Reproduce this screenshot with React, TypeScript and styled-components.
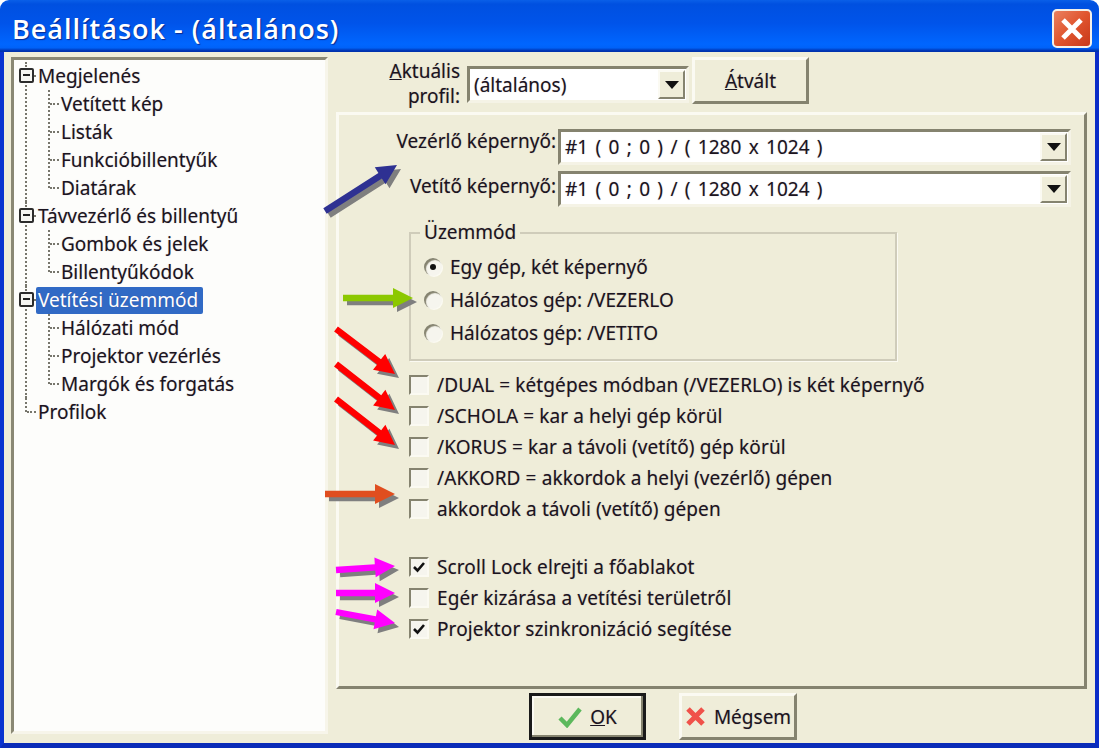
import React from 'react';
import styled, { createGlobalStyle } from 'styled-components';

const GlobalStyle = createGlobalStyle`
  html, body {
    margin: 0;
    padding: 0;
    background: #fff;
    overflow: hidden;
  }
  * {
    box-sizing: border-box;
  }
`;

const Window = styled.div`
  position: relative;
  width: 1099px;
  height: 748px;
  display: flex;
  flex-direction: column;
  font-family: "Noto Sans", "Liberation Sans", sans-serif;
  font-size: 19px;
  color: #1b1420;
  text-shadow: 0 0 1px rgba(60, 30, 70, 0.35);
`;

const TitleBar = styled.div`
  height: 52px;
  flex: none;
  display: flex;
  align-items: center;
  justify-content: space-between;
  padding: 0 7px 0 12px;
  border-radius: 9px 9px 0 0;
  background: linear-gradient(180deg, #0a5fe8 0, #0050e0 8%, #0054ea 45%, #0066ff 85%, #0062f8 92%, #0038b8 97%, #0030a8 100%);
`;

const Title = styled.div`
  padding-top: 5px;
  color: #fff;
  font-family: "Open Sans", "Liberation Sans", sans-serif;
  font-size: 27px;
  font-weight: 600;
  letter-spacing: 1px;
  text-shadow: 1px 1px 1px #0a2a90;
`;

const CloseButton = styled.div`
  width: 40px;
  height: 39px;
  margin-top: 5px;
  display: flex;
  align-items: center;
  justify-content: center;
  border: 2px solid #f4f1ea;
  border-radius: 5px;
  background: linear-gradient(135deg, #ea8060 0, #e0552e 50%, #c8381a 100%);
`;

const Body = styled.div`
  flex: 1;
  display: flex;
  gap: 8px;
  padding: 5px 4px 0 7px;
  background: #efedd9;
  border-left: 4px solid #0a34d0;
  border-right: 4px solid #0a2cc8;
  border-bottom: 5px solid #0a2cb8;
`;

const Tree = styled.div`
  width: 317px;
  height: 677px;
  padding-top: 2px;
  background: #fdfdfb;
  border: 3px solid;
  border-color: #8a8874 #f7f5ea #f7f5ea #8a8874;
`;

const Branch = styled.div<{ $last?: boolean }>`
  position: relative;
  &::before {
    content: "";
    position: absolute;
    left: 11px;
    top: 0;
    height: ${(p) => (p.$last ? '14px' : '100%')};
    border-left: 2px dotted #77766c;
  }
`;

const ChildGroup = styled.div`
  position: relative;
  &::before {
    content: "";
    position: absolute;
    left: 34px;
    top: 0;
    bottom: 14px;
    border-left: 2px dotted #77766c;
  }
`;

const Row = styled.div<{ $child?: boolean; $leaf?: boolean }>`
  position: relative;
  height: 28px;
  display: flex;
  align-items: center;
  padding-left: ${(p) => (p.$child ? '45px' : '22px')};
  &::before {
    content: "";
    position: absolute;
    left: ${(p) => (p.$child ? '36px' : p.$leaf ? '13px' : '18px')};
    width: ${(p) => (p.$child ? '9px' : p.$leaf ? '9px' : '4px')};
    top: 13px;
    border-top: 2px dotted #77766c;
  }
`;

const Label = styled.span<{ $selected?: boolean }>`
  height: 27px;
  line-height: 26px;
  padding: 0 ${(p) => (p.$selected ? '5px' : '2px')} 0 2px;
  border-radius: 2px;
  white-space: nowrap;
  background: ${(p) => (p.$selected ? '#316ac5' : 'transparent')};
  color: ${(p) => (p.$selected ? '#fff' : 'inherit')};
`;

const Expander = styled.span`
  position: absolute;
  z-index: 1;
  left: 5px;
  top: 6px;
  width: 15px;
  height: 15px;
  background: #f6f6f2;
  border: 2px solid #2c2c2c;
  border-radius: 2px;
  &::after {
    content: "";
    position: absolute;
    left: 2px;
    right: 2px;
    top: 4px;
    height: 2px;
    background: #222;
  }
`;

const RightColumn = styled.div`
  width: 751px;
  display: flex;
  flex-direction: column;
`;

const ProfileRow = styled.div`
  height: 55px;
  flex: none;
  display: flex;
  align-items: flex-start;
`;

const ProfileLabel = styled.div`
  width: 124px;
  margin-right: 7px;
  padding-top: 2px;
  text-align: right;
  line-height: 25px;
`;

const Combo = styled.div<{ $width?: number; $height?: number; $top?: number }>`
  width: ${(p) => (p.$width ? `${p.$width}px` : '100%')};
  height: ${(p) => p.$height || 36}px;
  margin-top: ${(p) => p.$top || 0}px;
  flex: none;
  display: flex;
  align-items: center;
  justify-content: space-between;
  padding: 1px 1px 1px 4px;
  background: #fff;
  border: 3px solid;
  border-color: #85836f #f5f3e6 #f5f3e6 #85836f;
  white-space: nowrap;
  word-spacing: 2.4px;
`;

const ComboArrow = styled.span`
  width: 27px;
  height: 100%;
  flex: none;
  display: flex;
  align-items: center;
  justify-content: center;
  background: #efedd9;
  border: 2px solid;
  border-color: #fbfaf2 #85836f #85836f #fbfaf2;
  &::after {
    content: "";
    border-left: 7px solid transparent;
    border-right: 7px solid transparent;
    border-top: 8px solid #111;
  }
`;

const Button = styled.div<{ $width: number; $default?: boolean; $left?: number }>`
  width: ${(p) => p.$width}px;
  height: 47px;
  margin-left: ${(p) => p.$left || 0}px;
  flex: none;
  display: flex;
  align-items: center;
  justify-content: center;
  gap: 8px;
  background: #efedd9;
  border: 3px solid;
  border-color: ${(p) => (p.$default ? '#1a1a1a' : '#fbfaf2 #85836f #85836f #fbfaf2')};
  box-shadow: ${(p) => (p.$default ? 'inset -2px -2px 0 #85836f, inset 2px 2px 0 #fbfaf2' : 'none')};
`;

const Panel = styled.div`
  height: 577px;
  flex: none;
  padding: 14px 13px 0 0;
  border: 3px solid;
  border-color: #fbfaf2 #85836f #85836f #fbfaf2;
`;

const ScreenRow = styled.div`
  display: grid;
  grid-template-columns: 217px 1fr;
  column-gap: 2px;
  margin-bottom: 6px;
`;

const ScreenLabel = styled.div<{ $lift: number }>`
  text-align: right;
  line-height: ${(p) => p.$lift}px;
  white-space: nowrap;
`;

const ModeGroup = styled.fieldset`
  width: 488px;
  height: 140px;
  margin: 14px 0 0 70px;
  padding: 5px 0 0 13px;
  border: 2px solid #cfccba;
  box-shadow: 1px 1px 0 #fbfaf2;
`;

const ModeLegend = styled.legend`
  margin-left: -4px;
  padding: 0 4px;
  height: 24px;
  line-height: 22px;
`;

const OptionRow = styled.div<{ $height: number }>`
  height: ${(p) => p.$height}px;
  display: flex;
  align-items: center;
  gap: 8px;
  white-space: nowrap;
`;

const RadioDot = styled.span<{ $checked?: boolean }>`
  position: relative;
  width: 18px;
  height: 18px;
  flex: none;
  border-radius: 50%;
  background: #f6f5ee;
  box-shadow: inset 2px 2px 1px #85836f, 1px 1px 0 #fbfaf2;
  &::after {
    content: "";
    display: ${(p) => (p.$checked ? 'block' : 'none')};
    position: absolute;
    left: 6px;
    top: 6px;
    width: 6px;
    height: 6px;
    border-radius: 50%;
    background: #111;
  }
`;

const OptionList = styled.div<{ $top: number }>`
  margin: ${(p) => p.$top}px 0 0 70px;
  letter-spacing: 0.1px;
`;

const CheckBox = styled.span`
  width: 20px;
  height: 20px;
  flex: none;
  display: flex;
  align-items: center;
  justify-content: center;
  background: #f6f5ee;
  border: 2px solid;
  border-color: #85836f #fbfaf2 #fbfaf2 #85836f;
`;

const AccessKey = styled.span`
  text-decoration: underline;
`;

const Footer = styled.div`
  flex: 1;
  display: flex;
  align-items: flex-start;
  padding: 4px 0 0 193px;
  gap: 33px;
`;

const Overlay = styled.svg`
  position: absolute;
  left: 0;
  top: 0;
  pointer-events: none;
`;

const arrowPoints = (x1: number, y1: number, x2: number, y2: number, dx = 0, dy = 0) => {
  const len = Math.hypot(x2 - x1, y2 - y1);
  const ux = (x2 - x1) / len;
  const uy = (y2 - y1) / len;
  const nx = -uy;
  const ny = ux;
  const headLen = 20;
  const headW = 10;
  const shaftW = 3.2;
  const bx = x2 - ux * headLen;
  const by = y2 - uy * headLen;
  const pts = [
    [x1 + nx * shaftW, y1 + ny * shaftW],
    [bx + nx * shaftW, by + ny * shaftW],
    [bx + nx * headW, by + ny * headW],
    [x2, y2],
    [bx - nx * headW, by - ny * headW],
    [bx - nx * shaftW, by - ny * shaftW],
    [x1 - nx * shaftW, y1 - ny * shaftW],
  ];
  return pts.map(([x, y]) => `${(x + dx).toFixed(1)},${(y + dy).toFixed(1)}`).join(' ');
};

const arrows = [
  { from: [325, 211], to: [397, 165], color: '#2e3192' },
  { from: [343, 298], to: [413, 298], color: '#8cc800' },
  { from: [336, 329], to: [395, 374], color: '#ff0000' },
  { from: [336, 364], to: [395, 410], color: '#ff0000' },
  { from: [336, 399], to: [395, 445], color: '#ff0000' },
  { from: [325, 494], to: [395, 494], color: '#e04e1f' },
  { from: [336, 570], to: [395, 566], color: '#ff00ff' },
  { from: [336, 593], to: [395, 593], color: '#ff00ff' },
  { from: [336, 612], to: [395, 623], color: '#ff00ff' },
];

const Check = () => (
  <svg width="14" height="14" viewBox="0 0 14 14">
    <path d="M2 7 L5.5 10.5 L12 3" fill="none" stroke="#111" strokeWidth="2.6" />
  </svg>
);

const treeData = [
  { label: 'Megjelenés', children: ['Vetített kép', 'Listák', 'Funkcióbillentyűk', 'Diatárak'] },
  { label: 'Távvezérlő és billentyű', children: ['Gombok és jelek', 'Billentyűkódok'] },
  { label: 'Vetítési üzemmód', selected: true, children: ['Hálózati mód', 'Projektor vezérlés', 'Margók és forgatás'] },
];

const firstOptions = [
  { text: '/DUAL = kétgépes módban (/VEZERLO) is két képernyő' },
  { text: '/SCHOLA = kar a helyi gép körül' },
  { text: '/KORUS = kar a távoli (vetítő) gép körül' },
  { text: '/AKKORD = akkordok a helyi (vezérlő) gépen' },
  { text: 'akkordok a távoli (vetítő) gépen' },
];

const secondOptions = [
  { text: 'Scroll Lock elrejti a főablakot', checked: true },
  { text: 'Egér kizárása a vetítési területről', checked: false },
  { text: 'Projektor szinkronizáció segítése', checked: true },
];

const SCREEN_VALUE = '#1 ( 0 ; 0 ) / ( 1280 x 1024 )';

export default function App() {
  return (
    <Window>
      <GlobalStyle />
      <TitleBar>
        <Title>Beállítások - (általános)</Title>
        <CloseButton>
          <svg width="26" height="26" viewBox="0 0 26 26">
            <path d="M4 4 L22 22 M22 4 L4 22" stroke="#fff" strokeWidth="5" />
          </svg>
        </CloseButton>
      </TitleBar>
      <Body>
        <Tree>
          {treeData.map((node) => (
            <Branch key={node.label}>
              <Row>
                <Expander />
                <Label $selected={node.selected}>{node.label}</Label>
              </Row>
              <ChildGroup>
                {node.children.map((child) => (
                  <Row $child key={child}>
                    <Label>{child}</Label>
                  </Row>
                ))}
              </ChildGroup>
            </Branch>
          ))}
          <Branch $last>
            <Row $leaf>
              <Label>Profilok</Label>
            </Row>
          </Branch>
        </Tree>
        <RightColumn>
          <ProfileRow>
            <ProfileLabel>
              <AccessKey>A</AccessKey>ktuális
              <br />
              profil:
            </ProfileLabel>
            <Combo $width={222} $height={37} $top={9}>
              (általános)
              <ComboArrow />
            </Combo>
            <Button $width={117} $left={3}>
              <span>
                <AccessKey>Á</AccessKey>tvált
              </span>
            </Button>
          </ProfileRow>
          <Panel>
            <ScreenRow>
              <ScreenLabel $lift={25}>Vezérlő képernyő:</ScreenLabel>
              <Combo>
                {SCREEN_VALUE}
                <ComboArrow />
              </Combo>
            </ScreenRow>
            <ScreenRow>
              <ScreenLabel $lift={30}>Vetítő képernyő:</ScreenLabel>
              <Combo>
                {SCREEN_VALUE}
                <ComboArrow />
              </Combo>
            </ScreenRow>
            <ModeGroup>
              <ModeLegend>Üzemmód</ModeLegend>
              <OptionRow $height={33}>
                <RadioDot $checked />
                Egy gép, két képernyő
              </OptionRow>
              <OptionRow $height={33}>
                <RadioDot />
                Hálózatos gép: /VEZERLO
              </OptionRow>
              <OptionRow $height={33}>
                <RadioDot />
                Hálózatos gép: /VETITO
              </OptionRow>
            </ModeGroup>
            <OptionList $top={8}>
              {firstOptions.map((opt) => (
                <OptionRow $height={31} key={opt.text}>
                  <CheckBox />
                  {opt.text}
                </OptionRow>
              ))}
            </OptionList>
            <OptionList $top={27}>
              {secondOptions.map((opt) => (
                <OptionRow $height={31} key={opt.text}>
                  <CheckBox>{opt.checked && <Check />}</CheckBox>
                  {opt.text}
                </OptionRow>
              ))}
            </OptionList>
          </Panel>
          <Footer>
            <Button $width={117} $default>
              <svg width="24" height="22" viewBox="0 0 24 22">
                <path d="M2 12 L9 19 L22 3" fill="none" stroke="#5cb85c" strokeWidth="4.5" />
              </svg>
              <span>
                <AccessKey>O</AccessKey>K
              </span>
            </Button>
            <Button $width={118}>
              <svg width="21" height="21" viewBox="0 0 21 21">
                <path d="M3 3 L18 18 M18 3 L3 18" stroke="#f0524a" strokeWidth="5" />
              </svg>
              <span>Mégsem</span>
            </Button>
          </Footer>
        </RightColumn>
      </Body>
      <Overlay width="1099" height="748">
        {arrows.map((a) => (
          <g key={`${a.from[0]}-${a.from[1]}`}>
            <polygon points={arrowPoints(a.from[0], a.from[1], a.to[0], a.to[1], 4, 4)} fill="#7f7f7f" />
            <polygon points={arrowPoints(a.from[0], a.from[1], a.to[0], a.to[1])} fill={a.color} />
          </g>
        ))}
      </Overlay>
    </Window>
  );
}
